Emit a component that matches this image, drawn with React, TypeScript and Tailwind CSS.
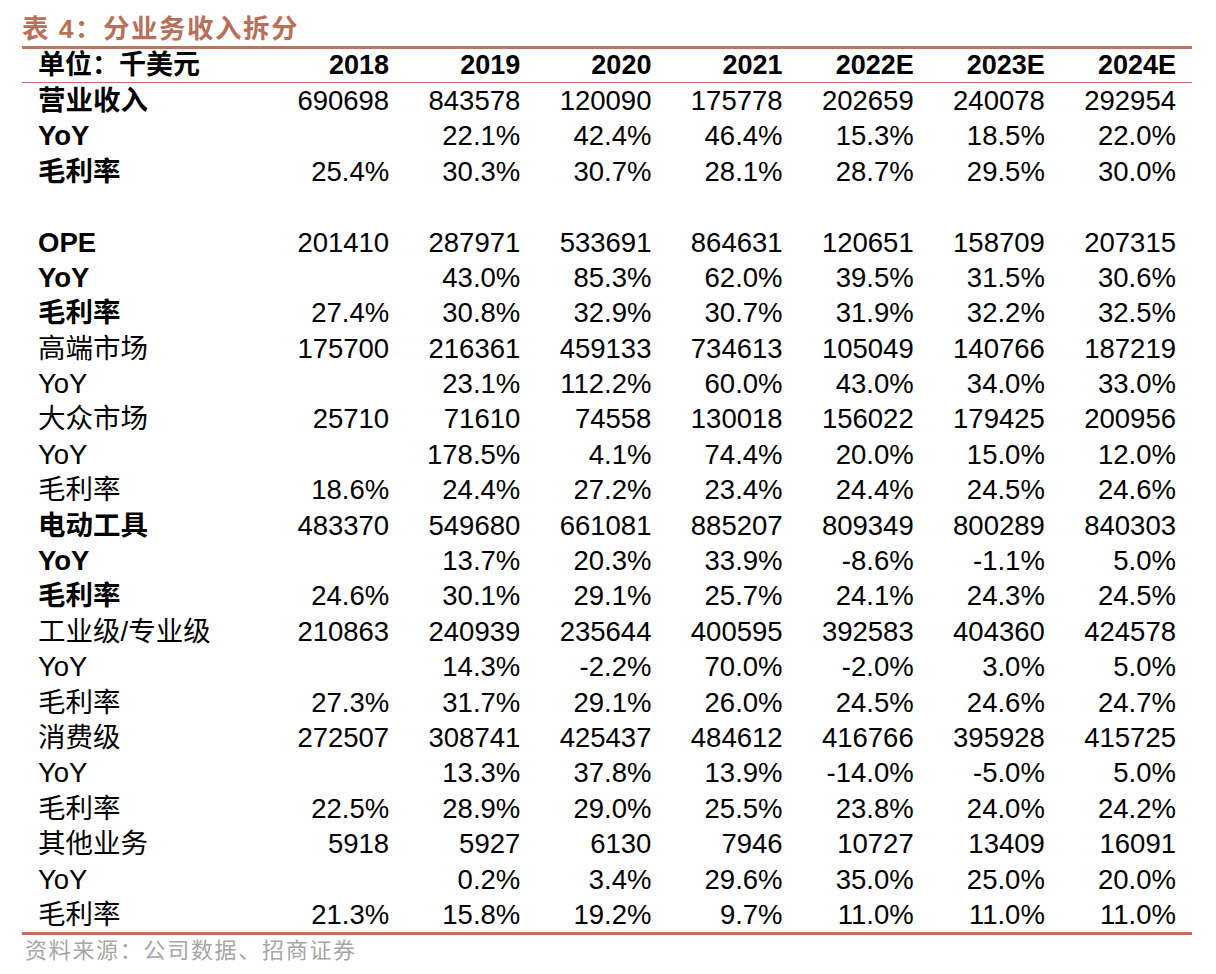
const years = ['2018', '2019', '2020', '2021', '2022E', '2023E', '2024E'];

type Row = { label: string; bold?: boolean; values: string[] };

const rows: (Row | null)[] = [
  { label: '营业收入', bold: true, values: ['690698', '843578', '120090', '175778', '202659', '240078', '292954'] },
  { label: 'YoY', bold: true, values: ['', '22.1%', '42.4%', '46.4%', '15.3%', '18.5%', '22.0%'] },
  { label: '毛利率', bold: true, values: ['25.4%', '30.3%', '30.7%', '28.1%', '28.7%', '29.5%', '30.0%'] },
  null,
  { label: 'OPE', bold: true, values: ['201410', '287971', '533691', '864631', '120651', '158709', '207315'] },
  { label: 'YoY', bold: true, values: ['', '43.0%', '85.3%', '62.0%', '39.5%', '31.5%', '30.6%'] },
  { label: '毛利率', bold: true, values: ['27.4%', '30.8%', '32.9%', '30.7%', '31.9%', '32.2%', '32.5%'] },
  { label: '高端市场', values: ['175700', '216361', '459133', '734613', '105049', '140766', '187219'] },
  { label: 'YoY', values: ['', '23.1%', '112.2%', '60.0%', '43.0%', '34.0%', '33.0%'] },
  { label: '大众市场', values: ['25710', '71610', '74558', '130018', '156022', '179425', '200956'] },
  { label: 'YoY', values: ['', '178.5%', '4.1%', '74.4%', '20.0%', '15.0%', '12.0%'] },
  { label: '毛利率', values: ['18.6%', '24.4%', '27.2%', '23.4%', '24.4%', '24.5%', '24.6%'] },
  { label: '电动工具', bold: true, values: ['483370', '549680', '661081', '885207', '809349', '800289', '840303'] },
  { label: 'YoY', bold: true, values: ['', '13.7%', '20.3%', '33.9%', '-8.6%', '-1.1%', '5.0%'] },
  { label: '毛利率', bold: true, values: ['24.6%', '30.1%', '29.1%', '25.7%', '24.1%', '24.3%', '24.5%'] },
  { label: '工业级/专业级', values: ['210863', '240939', '235644', '400595', '392583', '404360', '424578'] },
  { label: 'YoY', values: ['', '14.3%', '-2.2%', '70.0%', '-2.0%', '3.0%', '5.0%'] },
  { label: '毛利率', values: ['27.3%', '31.7%', '29.1%', '26.0%', '24.5%', '24.6%', '24.7%'] },
  { label: '消费级', values: ['272507', '308741', '425437', '484612', '416766', '395928', '415725'] },
  { label: 'YoY', values: ['', '13.3%', '37.8%', '13.9%', '-14.0%', '-5.0%', '5.0%'] },
  { label: '毛利率', values: ['22.5%', '28.9%', '29.0%', '25.5%', '23.8%', '24.0%', '24.2%'] },
  { label: '其他业务', values: ['5918', '5927', '6130', '7946', '10727', '13409', '16091'] },
  { label: 'YoY', values: ['', '0.2%', '3.4%', '29.6%', '35.0%', '25.0%', '20.0%'] },
  { label: '毛利率', values: ['21.3%', '15.8%', '19.2%', '9.7%', '11.0%', '11.0%', '11.0%'] },
];

export default function App() {
  return (
    <div
      className="w-[1216px] h-[974px] bg-white text-black"
      style={{ fontFamily: '"Liberation Sans", "Noto Sans CJK SC", sans-serif' }}
    >
      <div className="ml-[22px] w-[1170px]">
        {/* title */}
        <div className="h-[46px] flex items-end">
          <span className="text-[26.5px] leading-[34px] font-bold tracking-[1.5px] text-[#b9705a]">
            表 4：分业务收入拆分
          </span>
        </div>
        <div className="h-[3px] bg-[#c0735b]" />

        {/* header */}
        <div className="h-[33px] px-4 grid grid-cols-[220px_repeat(7,1fr)] items-center font-bold text-[27px] leading-none">
          <span>单位：千美元</span>
          {years.map((y) => (
            <span key={y} className="text-right">{y}</span>
          ))}
        </div>
        <div className="h-px bg-[#c0735b]" />

        {/* body */}
        {rows.map((r, i) =>
          r === null ? (
            <div key={i} className="h-[35.4px]" />
          ) : (
            <div
              key={i}
              className="h-[35.4px] px-4 grid grid-cols-[220px_repeat(7,1fr)] items-center text-[27.5px] leading-none"
            >
              <span className={r.bold ? 'font-bold' : ''}>{r.label}</span>
              {r.values.map((v, j) => (
                <span key={j} className="text-right">{v}</span>
              ))}
            </div>
          )
        )}
        <div className="h-[3px] bg-[#c0735b]" />

        {/* source */}
        <div className="h-[32px] flex items-center pl-[3px] text-[22px] tracking-[1.7px] leading-none text-[#a6a6a6]">
          资料来源：公司数据、招商证券
        </div>
      </div>
    </div>
  );
}
